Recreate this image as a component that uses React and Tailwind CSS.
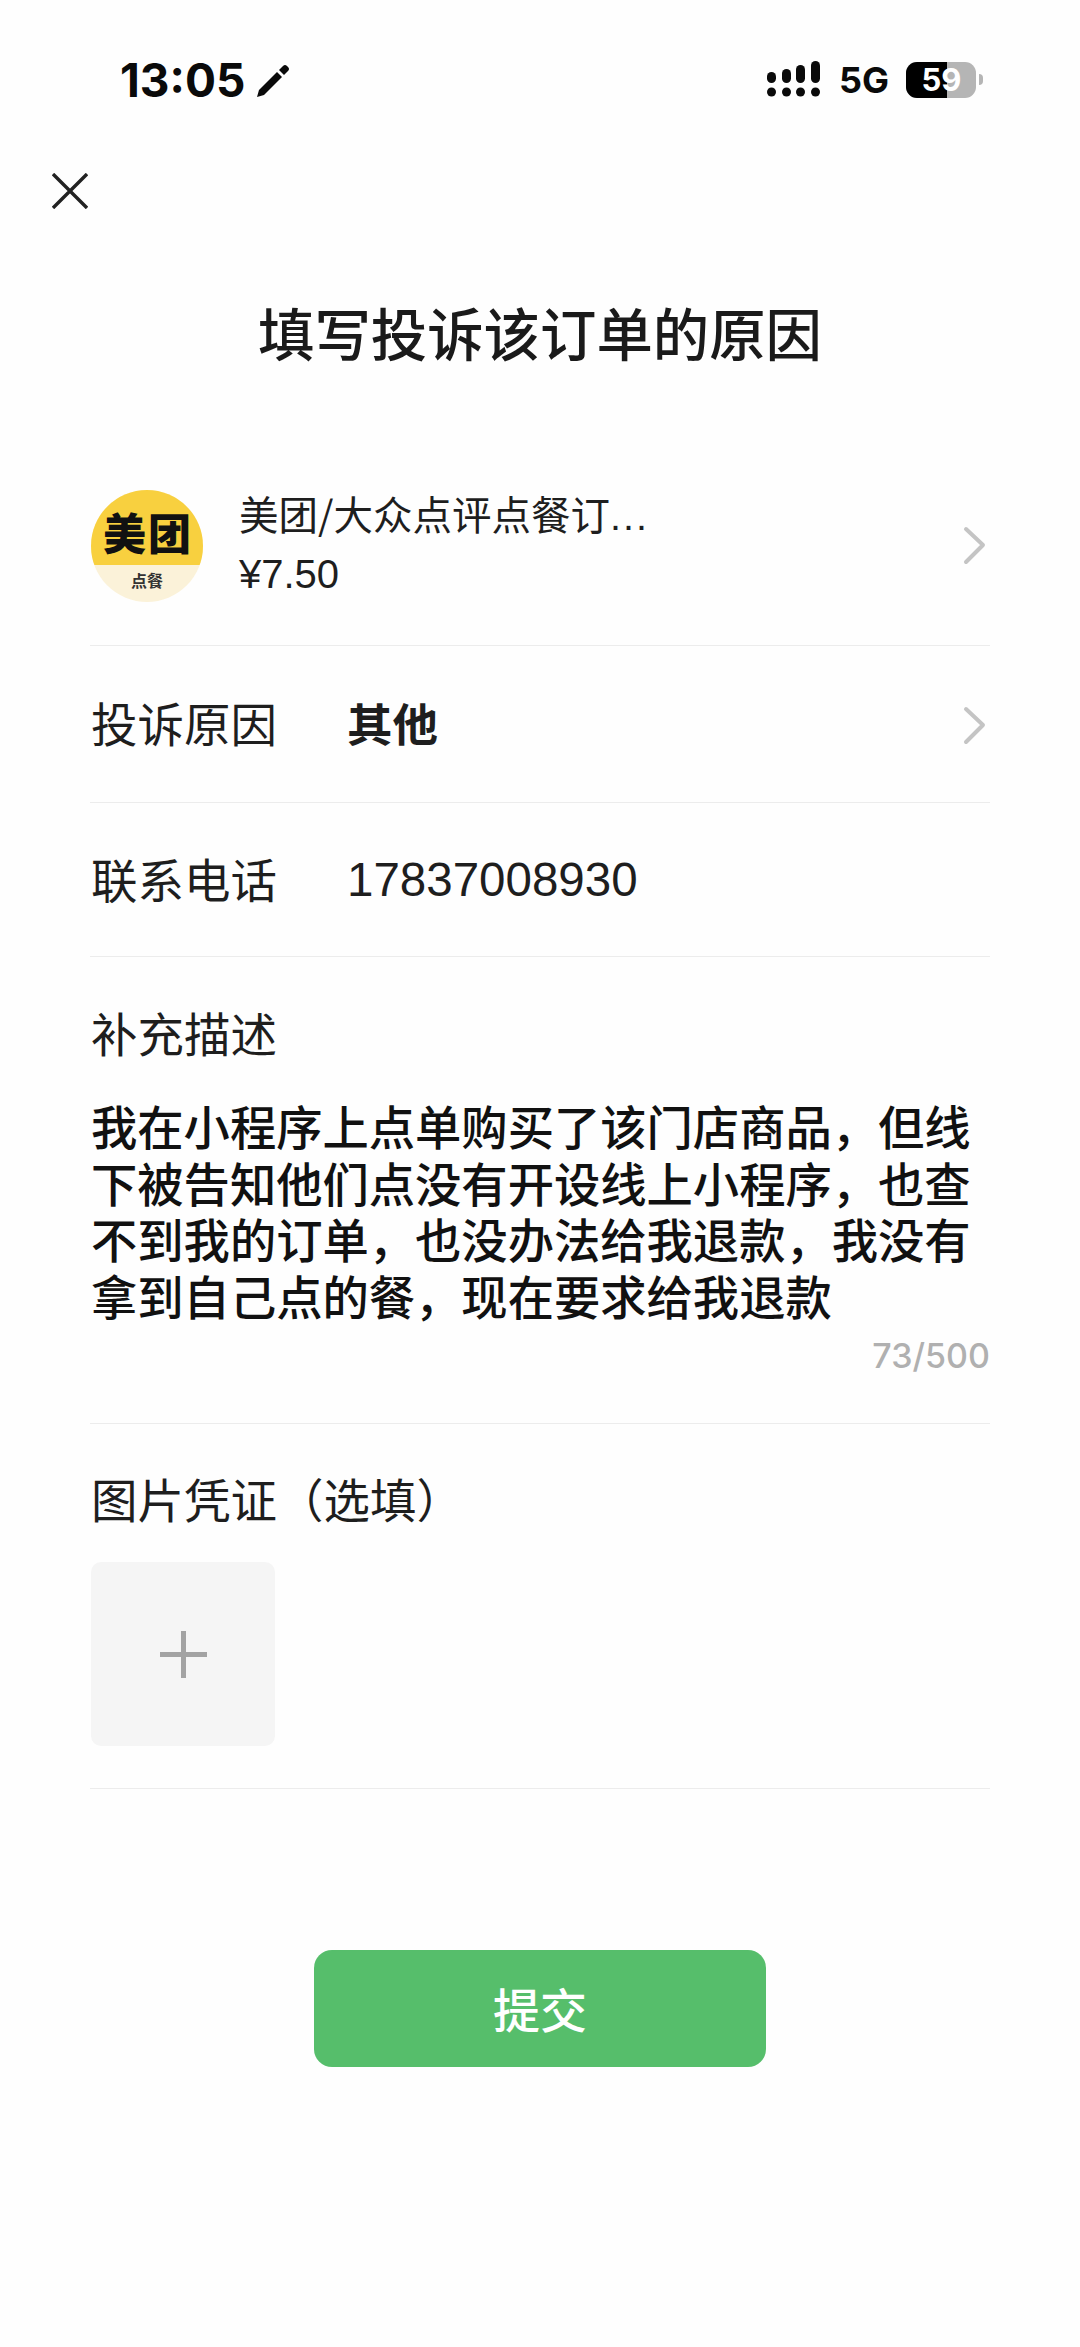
import React from "react";

const cjk = '"Noto Sans CJK SC", "Liberation Sans", sans-serif';
const latin = '"Liberation Sans", sans-serif';
const inter = '"Inter", sans-serif';

const Chevron = ({ className = "" }) => (
  <svg width="24" height="40" viewBox="0 0 24 40" fill="none" className={`mr-[4px] shrink-0 ${className}`}>
    <path d="M4 3 L21 19 L4 36" stroke="#c4c4c4" strokeWidth="4" strokeLinecap="round" strokeLinejoin="round" />
  </svg>
);

const Pen = () => (
  <svg width="34" height="35" viewBox="0 0 34 35" className="ml-[11px]">
    <path d="M1 34 L3 27 L21 9 L26 14 L8 32 Z" fill="#0a0a0a" />
    <path d="M23 7 L27 3 Q29 1 31 3 L32 4 Q34 6 32 8 L28 12 Z" fill="#0a0a0a" />
  </svg>
);

const Signal = () => (
  <svg width="55" height="37" viewBox="0 0 55 37" fill="#0a0a0a">
    <rect x="0" y="11" width="9" height="11" rx="4.5" />
    <rect x="15" y="8" width="9" height="14" rx="4.5" />
    <rect x="29" y="4" width="9" height="18" rx="4.5" />
    <rect x="44" y="0" width="9" height="22" rx="4.5" />
    <circle cx="4.5" cy="31" r="4.5" />
    <circle cx="19.5" cy="31" r="4.5" />
    <circle cx="33.5" cy="31" r="4.5" />
    <circle cx="48.5" cy="31" r="4.5" />
  </svg>
);

const Battery = () => (
  <div className="flex items-center">
    <div className="relative h-[36px] w-[70px] overflow-hidden rounded-[11px] bg-[#b5b5b5]">
      <div className="absolute inset-y-0 left-0 w-[41px] bg-black" />
      <div className="relative flex h-full items-center justify-center pl-[1px] text-[31px] font-bold leading-none text-white" style={{ fontFamily: inter }}>
        59
      </div>
    </div>
    <div className="ml-[3px] h-[11px] w-[4px] rounded-r-full bg-[#b5b5b5]" />
  </div>
);

const Logo = () => (
  <div className="ml-[1px] h-[112px] w-[112px] shrink-0 overflow-hidden rounded-full bg-[#fbf2d9]">
    <div className="flex h-[75px] items-center justify-center gap-[2px] bg-[#f8d03f] pt-[8px]">
      <span className="text-[43px] font-black leading-none text-[#111]">美</span>
      <span className="text-[43px] font-black leading-none text-[#111]">团</span>
    </div>
    <div className="pt-[7px] text-center text-[16px] font-bold leading-none text-[#333]">点餐</div>
  </div>
);

export default function App() {
  return (
    <div className="min-h-[2347px] w-[1080px] bg-[#fefefe] text-[#1e1e1e]" style={{ fontFamily: cjk }}>
      {/* status bar */}
      <div className="flex h-[100px] items-start justify-between pl-[120px] pr-[97px] pt-[57px]">
        <div className="flex items-center">
          <span className="text-[46px] font-bold leading-[46px] text-[#0a0a0a]" style={{ fontFamily: inter }}>13:05</span>
          <Pen />
        </div>
        <div className="flex items-center pt-[4px]">
          <Signal />
          <span className="ml-[17px] text-[36px] font-bold leading-none text-[#0a0a0a]" style={{ fontFamily: inter }}>5G</span>
          <div className="ml-[17px]"><Battery /></div>
        </div>
      </div>

      {/* close */}
      <div className="pl-[52px] pt-[73px]">
        <svg width="36" height="36" viewBox="0 0 36 36" fill="none" className="block">
          <path d="M1 1 L35 35 M35 1 L1 35" stroke="#222" strokeWidth="3.4" />
        </svg>
      </div>

      <h1 className="mt-[85px] text-center text-[56.4px] font-medium leading-[76px] text-[#1a1a1a]">填写投诉该订单的原因</h1>

      <div className="mx-[90px] mt-[96px]">
        {/* order */}
        <div className="flex h-[180px] items-center border-b border-[#ececec] pb-[20px]">
          <Logo />
          <div className="ml-[36px] flex-1 pb-[5px]">
            <div className="text-[39.5px] leading-[58px]">
              美团/大众点评点餐订<span className="tracking-[2px]" style={{ fontFamily: latin }}>...</span>
            </div>
            <div className="text-[40px] leading-[58px]" style={{ fontFamily: latin }}>¥7.50</div>
          </div>
          <Chevron />
        </div>

        <div className="flex h-[157px] items-center border-b border-[#ececec]">
          <div className="w-[257px] pb-[4px] pl-[1px] text-[46.5px] leading-none">投诉原因</div>
          <div className="flex-1 pb-[2px] text-[45.5px] font-bold leading-none">其他</div>
          <Chevron className="mt-[3px]" />
        </div>

        <div className="flex h-[154px] items-center border-b border-[#ececec]">
          <div className="w-[257px] pb-[3px] pl-[1px] text-[46.5px] leading-none">联系电话</div>
          <div className="flex-1 text-[47.5px] leading-none" style={{ fontFamily: latin }}>17837008930</div>
        </div>

        {/* description */}
        <div className="h-[467px] border-b border-[#ececec] pt-[45px]">
          <div className="pl-[1px] text-[46.5px] leading-[60px]">补充描述</div>
          <p className="ml-[1px] mt-[35px] text-[46.3px] font-medium leading-[56.5px] text-[#111]">
            我在小程序上点单购买了该门店商品，但线下被告知他们点没有开设线上小程序，也查不到我的订单，也没办法给我退款，我没有拿到自己点的餐，现在要求给我退款
          </p>
          <div className="mt-[13px] text-right text-[34px] font-medium leading-[40px] text-[#b0b0b0]" style={{ fontFamily: inter }}>73/500</div>
        </div>

        {/* images */}
        <div className="h-[365px] border-b border-[#ececec] pt-[44px]">
          <div className="pl-[1px] text-[46.5px] leading-[60px]">图片凭证（选填）</div>
          <div className="ml-[1px] mt-[34px] flex h-[184px] w-[184px] items-center justify-center rounded-[10px] bg-[#f5f5f5]">
            <svg width="47" height="47" viewBox="0 0 47 47" className="block">
              <path d="M0 21 H47 V26 H0 Z M21 0 H26 V47 H21 Z" fill="#a3a3a3" />
            </svg>
          </div>
        </div>
      </div>

      <div className="mt-[161px] flex justify-center">
        <button className="h-[117px] w-[452px] rounded-[18px] bg-[#56be6b] text-[47px] font-medium text-white">提交</button>
      </div>
    </div>
  );
}
